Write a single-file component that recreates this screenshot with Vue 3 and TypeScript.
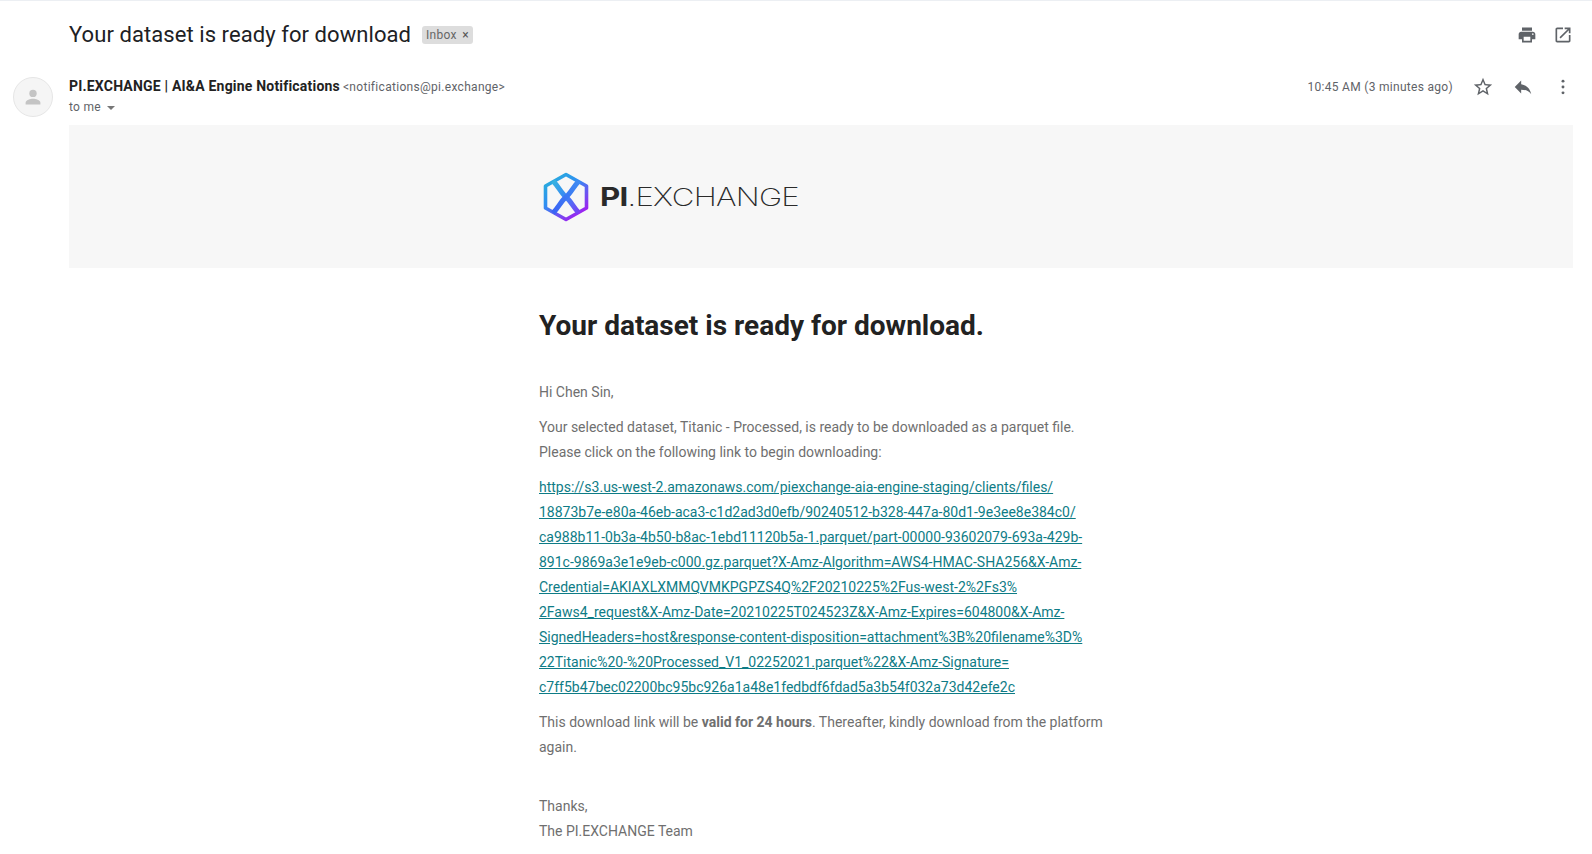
<script setup lang="ts">
const linkLines: string[] = [
  'https://s3.us-west-2.amazonaws.com/piexchange-aia-engine-staging/clients/files/',
  '18873b7e-e80a-46eb-aca3-c1d2ad3d0efb/90240512-b328-447a-80d1-9e3ee8e384c0/',
  'ca988b11-0b3a-4b50-b8ac-1ebd11120b5a-1.parquet/part-00000-93602079-693a-429b-',
  '891c-9869a3e1e9eb-c000.gz.parquet?X-Amz-Algorithm=AWS4-HMAC-SHA256&X-Amz-',
  'Credential=AKIAXLXMMQVMKPGPZS4Q%2F20210225%2Fus-west-2%2Fs3%',
  '2Faws4_request&X-Amz-Date=20210225T024523Z&X-Amz-Expires=604800&X-Amz-',
  'SignedHeaders=host&response-content-disposition=attachment%3B%20filename%3D%',
  '22Titanic%20-%20Processed_V1_02252021.parquet%22&X-Amz-Signature=',
  'c7ff5b47bec02200bc95bc926a1a48e1fedbdf6fdad5a3b54f032a73d42efe2c',
]
</script>

<template>
  <div class="page">
    <div class="subject-row">
      <h2 class="subject">Your dataset is ready for download</h2>
      <span class="label">Inbox <span class="label-x">×</span></span>
      <div class="subject-icons">
        <svg class="icon" viewBox="0 0 24 24"><path d="M19 8H5c-1.66 0-3 1.34-3 3v6h4v4h12v-4h4v-6c0-1.66-1.34-3-3-3zm-3 11H8v-5h8v5zm3-7c-.55 0-1-.45-1-1s.45-1 1-1 1 .45 1 1-.45 1-1 1zm-1-9H6v4h12V3z" /></svg>
        <svg class="icon" viewBox="0 0 24 24"><path d="M19 19H5V5h7V3H5c-1.11 0-2 .9-2 2v14c0 1.1.89 2 2 2h14c1.1 0 2-.9 2-2v-7h-2v7zM14 3v2h3.59l-9.83 9.83 1.41 1.41L19 6.41V10h2V3h-7z" /></svg>
      </div>
    </div>

    <div class="message">
      <div class="avatar">
        <svg viewBox="0 0 24 24"><circle cx="12" cy="8.4" r="3.7" /><path d="M4.6 19.4v-1.6c0-2.6 4.9-4 7.4-4s7.4 1.4 7.4 4v1.6z" /></svg>
      </div>
      <div class="message-main">
        <div class="sender-row">
          <div class="sender-info">
            <div class="sender-line">
              <span class="sender-name">PI.EXCHANGE | AI&amp;A Engine Notifications</span>
              <span class="sender-mail">&lt;notifications@pi.exchange&gt;</span>
            </div>
            <div class="to-line">to me <span class="caret"></span></div>
          </div>
          <div class="sender-actions">
            <span class="time">10:45 AM (3 minutes ago)</span>
            <svg class="icon action star" viewBox="0 0 24 24"><path d="M22 9.24l-7.19-.62L12 2 9.19 8.63 2 9.24l5.46 4.73L5.82 21 12 17.27 18.18 21l-1.63-7.03L22 9.24zM12 15.4l-3.76 2.27 1-4.28-3.32-2.88 4.38-.38L12 6.1l1.71 4.04 4.38.38-3.32 2.88 1 4.28L12 15.4z" /></svg>
            <svg class="icon action reply" viewBox="0 0 24 24"><path d="M10 9V5l-7 7 7 7v-4.1c5 0 8.5 1.6 11 5.1-1-5-4-10-11-11z" /></svg>
            <svg class="icon action more" viewBox="0 0 24 24"><circle cx="12" cy="5.6" r="1.6" /><circle cx="12" cy="12" r="1.6" /><circle cx="12" cy="18.4" r="1.6" /></svg>
          </div>
        </div>

        <div class="banner">
          <div class="column banner-inner">
            <svg class="logo-mark" viewBox="0 0 48 50">
              <defs>
                <linearGradient id="hexGrad" x1="0" y1="0" x2="0.7" y2="1">
                  <stop offset="0" stop-color="#27b5d6" />
                  <stop offset="0.45" stop-color="#2f8ff2" />
                  <stop offset="1" stop-color="#a01ff0" />
                </linearGradient>
                <linearGradient id="legDown" x1="0" y1="0" x2="1" y2="1">
                  <stop offset="0" stop-color="#35b4e0" />
                  <stop offset="0.5" stop-color="#3a86f5" />
                  <stop offset="1" stop-color="#7d3cf5" />
                </linearGradient>
                <linearGradient id="legUp" x1="0" y1="1" x2="1" y2="0">
                  <stop offset="0" stop-color="#3a62f5" />
                  <stop offset="1" stop-color="#3f8cf2" />
                </linearGradient>
              </defs>
              <path d="M24 2.5 L44.5 14 V36 L24 47.5 L3.5 36 V14 Z" fill="none" stroke="url(#hexGrad)" stroke-width="3.6" stroke-linejoin="round" />
              <path d="M11 9 C17 15 19 21 24 25 C29 29 31 35 37 41" fill="none" stroke="url(#legDown)" stroke-width="5" />
              <path d="M37 9 C31 15 29 21 24 25 C19 29 17 35 11 41" fill="none" stroke="url(#legUp)" stroke-width="5" />
            </svg>
            <div class="logo-text"><b>PI</b>.EXCHANGE</div>
          </div>
        </div>

        <div class="column body">
          <h1 class="headline">Your dataset is ready for download.</h1>
          <p class="greeting">Hi Chen Sin,</p>
          <p>Your selected dataset, Titanic - Processed, is ready to be downloaded as a parquet file.<br />Please click on the following link to begin downloading:</p>
          <p class="link-block"><a v-for="line in linkLines" :key="line" class="link">{{ line }}</a></p>
          <p>This download link will be <b>valid for 24 hours</b>. Thereafter, kindly download from the platform again.</p>
          <p class="thanks">Thanks,<br />The PI.EXCHANGE Team</p>
        </div>
      </div>
    </div>
  </div>
</template>

<style scoped>
.page {
  height: 854px;
  box-sizing: border-box;
  overflow: hidden;
  border-top: 1px solid #eceff3;
  font-family: Roboto, "Liberation Sans", sans-serif;
  color: #222;
  padding-right: 19px;
}

.subject-row {
  display: flex;
  align-items: center;
  height: 66px;
  padding-left: 69px;
}

.subject {
  margin: 0;
  font-size: 22px;
  font-weight: 400;
  letter-spacing: 0.07px;
  color: #202124;
}

.label {
  margin: 2px 0 0 11px;
  height: 18px;
  line-height: 18px;
  padding: 0 4px;
  border-radius: 3px;
  background: #dddddd;
  color: #666;
  font-size: 12px;
  letter-spacing: 0.3px;
}

.label-x {
  color: #555;
  margin-left: 2px;
}

.subject-icons {
  margin-left: auto;
  display: flex;
  gap: 16px;
  padding-top: 2px;
}

.icon {
  width: 20px;
  height: 20px;
  fill: #5f6368;
  display: block;
}

.message {
  display: flex;
}

.avatar {
  width: 40px;
  height: 40px;
  margin: 10px 16px 0 13px;
  flex: none;
  box-sizing: border-box;
  border-radius: 50%;
  background: #f5f5f5;
  border: 1px solid #e6e6e6;
  display: flex;
  align-items: center;
  justify-content: center;
}

.avatar svg {
  width: 24px;
  height: 24px;
  fill: #c4c4c4;
}

.message-main {
  flex: 1;
  min-width: 0;
}

.sender-row {
  display: flex;
  justify-content: space-between;
  height: 58px;
}

.sender-line {
  line-height: 20px;
  margin-top: 9px;
}

.sender-name {
  font-size: 14px;
  font-weight: 700;
  letter-spacing: 0.2px;
  color: #222;
}

.sender-mail {
  font-size: 12px;
  letter-spacing: 0.3px;
  color: #5f6368;
  margin-left: 3px;
}

.to-line {
  font-size: 12px;
  line-height: 20px;
  letter-spacing: 0.3px;
  color: #5f6368;
}

.caret {
  display: inline-block;
  margin-left: 3px;
  vertical-align: middle;
  border-left: 4px solid transparent;
  border-right: 4px solid transparent;
  border-top: 4px solid #777;
}

.sender-actions {
  display: flex;
  align-items: center;
  height: 40px;
  box-sizing: border-box;
}

.time {
  font-size: 12px;
  letter-spacing: 0.3px;
  color: #5f6368;
  margin-right: 19px;
}

.action {
  width: 22px;
  height: 22px;
}

.reply {
  margin-left: 18px;
}

.more {
  margin-left: 18px;
  margin-right: -1px;
}

.banner {
  background: #f7f7f7;
  height: 143px;
}

.column {
  width: 564px;
  margin-left: 470px;
}

.banner-inner {
  display: flex;
  align-items: center;
  height: 100%;
}

.logo-mark {
  width: 48px;
  height: 50px;
  margin-left: 3px;
  flex: none;
}

.logo-text {
  margin-left: 10px;
  font-family: Inter, Roboto, sans-serif;
  font-weight: 200;
  font-size: 25px;
  color: #2a2a2a;
  letter-spacing: -0.6px;
  transform: scaleX(1.25);
  transform-origin: left center;
  white-space: nowrap;
}

.logo-text b {
  font-weight: 700;
}

.body {
  padding-top: 40px;
  font-size: 14px;
  line-height: 25px;
  color: #6f6f6f;
}

.headline {
  margin: 0;
  font-size: 28px;
  line-height: 36px;
  font-weight: 700;
  color: #222;
}

.body p {
  margin: 0 0 10px;
}

.greeting {
  padding-top: 36px;
}

.link-block {
  width: 564px;
}

.link {
  display: block;
  color: #0e7c86;
  text-decoration: underline;
  white-space: nowrap;
}

.body b {
  font-weight: 700;
}

.body .thanks {
  margin-top: 34px;
}
</style>

<style>
html,
body {
  background: #fff;
}
</style>
